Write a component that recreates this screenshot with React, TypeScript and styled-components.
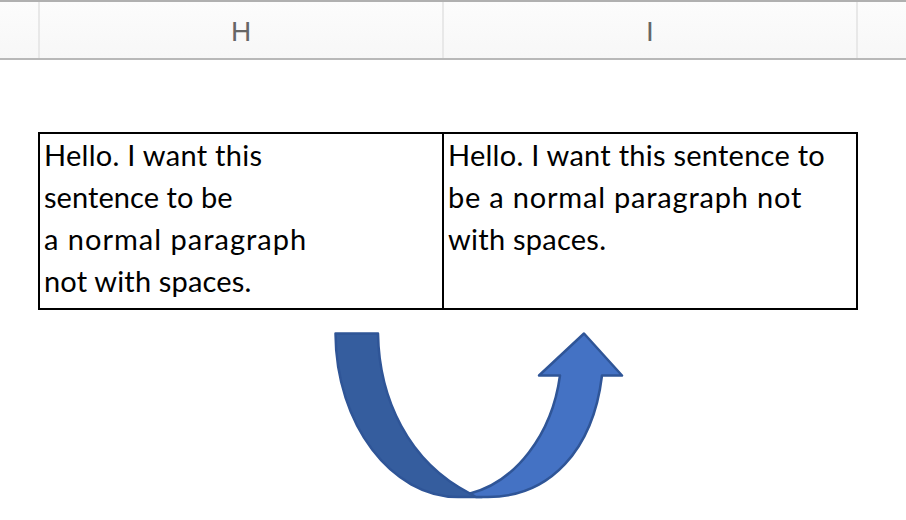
import React from "react";
import styled, { createGlobalStyle } from "styled-components";

const Global = createGlobalStyle`
  html, body { margin: 0; padding: 0; background: #fff; }
  body { width: 906px; height: 520px; overflow: hidden; }
`;

const Page = styled.div`
  width: 906px;
  height: 520px;
  display: flex;
  flex-direction: column;
  background: #fff;
`;

const HeaderBar = styled.div`
  height: 56px;
  display: grid;
  grid-template-columns: 40px 404px 414px 1fr;
  border-top: 2px solid #b0b0b0;
  border-bottom: 2px solid #b8b8b8;
  background: linear-gradient(#fcfcfc, #f7f7f7);
`;

const HeaderCell = styled.div<{ $last?: boolean }>`
  display: flex;
  align-items: center;
  justify-content: center;
  padding-top: 3px;
  box-sizing: border-box;
  border-right: ${(p) => (p.$last ? "none" : "2px solid #e8e8e8")};
  color: #666;
  font-family: "Liberation Sans", Arial, sans-serif;
  font-size: 28px;
  line-height: 1;
`;

const Sheet = styled.div`
  margin: 72px 0 0 38px;
  width: 820px;
  height: 178px;
  box-sizing: border-box;
  display: grid;
  grid-template-columns: 404px 1fr;
  border: 2px solid #000;
`;

const Cell = styled.div<{ $first?: boolean }>`
  box-sizing: border-box;
  padding-left: 4px;
  border-right: ${(p) => (p.$first ? "2px solid #000" : "none")};
  font-family: Lato, "Open Sans", sans-serif;
  font-size: 29px;
  line-height: 42px;
  color: #000;
`;

const Line = styled.div<{ $spacing: number }>`
  white-space: nowrap;
  letter-spacing: ${(p) => p.$spacing}px;
`;

const ArrowArea = styled.div`
  flex: 1;
`;

const ArrowSvg = styled.svg`
  display: block;
`;

const first = [
  { text: "Hello. I want this", spacing: 0.28 },
  { text: "sentence to be", spacing: 0.06 },
  { text: "a normal paragraph", spacing: 1 },
  { text: "not with spaces.", spacing: 0.17 },
];
const second = [
  { text: "Hello. I want this sentence to", spacing: 0.25 },
  { text: "be a normal paragraph not", spacing: 0.79 },
  { text: "with spaces.", spacing: 0.25 },
];

export default function App() {
  return (
    <Page>
      <Global />
      <HeaderBar>
        <HeaderCell />
        <HeaderCell>H</HeaderCell>
        <HeaderCell>I</HeaderCell>
        <HeaderCell $last />
      </HeaderBar>
      <Sheet>
        <Cell $first>
          {first.map((l) => (
            <Line key={l.text} $spacing={l.spacing}>{l.text}</Line>
          ))}
        </Cell>
        <Cell>
          {second.map((l) => (
            <Line key={l.text} $spacing={l.spacing}>{l.text}</Line>
          ))}
        </Cell>
      </Sheet>
      <ArrowArea>
        <ArrowSvg width="906" height="210" viewBox="0 310 906 210">
          <path
            d="M335.5 333.5 H378 C379 398 408 462 470 493.5 L482 497 H458 C392 497 336 425 335.5 333.5 Z"
            fill="#355d9e"
            stroke="#2f5597"
            strokeWidth="2.5"
            strokeLinejoin="round"
          />
          <path
            d="M470 493.5 C515 482 552 435 560 375.5 H539 L584 333.5 L622 375.5 H602 C593 450 550 497 488 497 H476 Z"
            fill="#4472c4"
            stroke="#2f5597"
            strokeWidth="2.5"
            strokeLinejoin="round"
          />
        </ArrowSvg>
      </ArrowArea>
    </Page>
  );
}
